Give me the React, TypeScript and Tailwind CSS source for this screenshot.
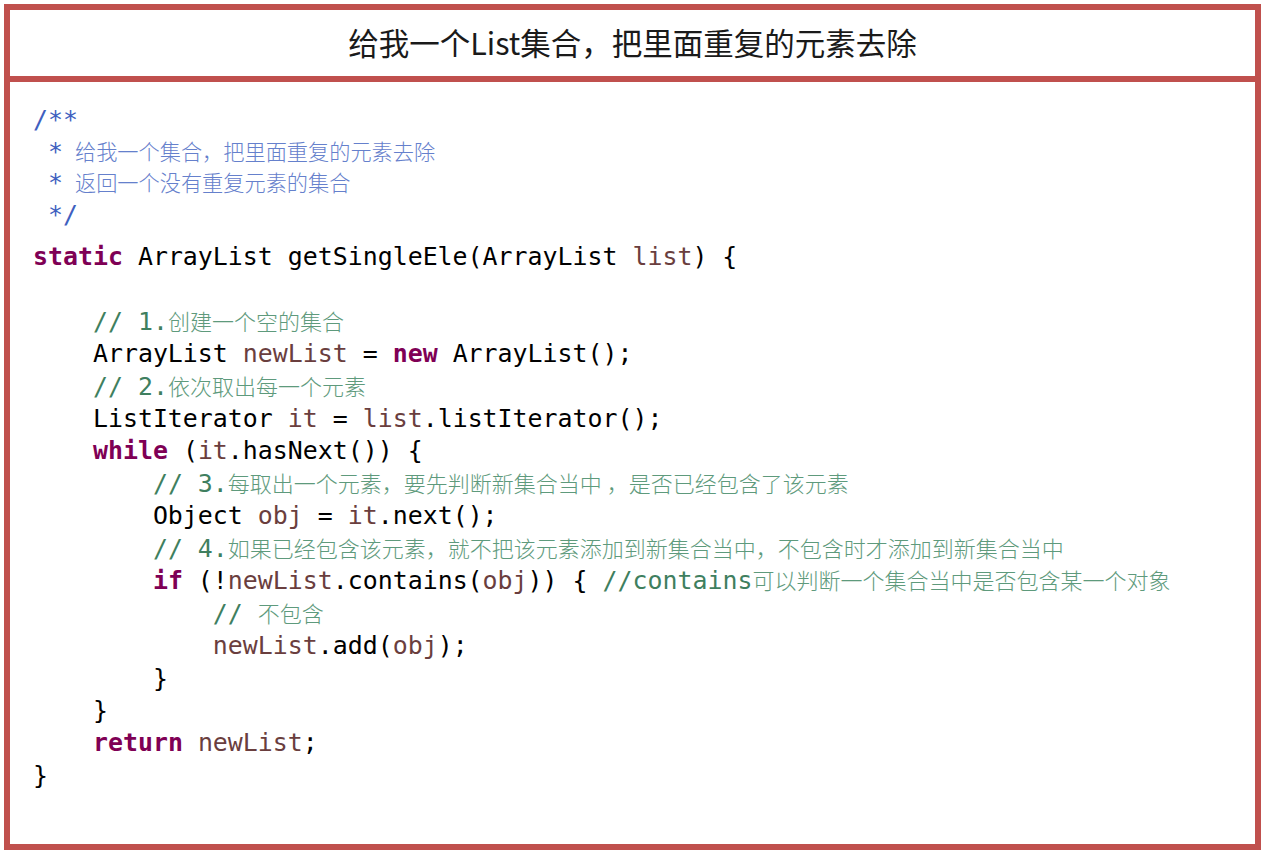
import React from "react";

type Tok = { t: string; k?: "kw" | "var" | "cm" | "doc" | "cjk" | "doccjk" };

const mono = { fontFamily: '"DejaVu Sans Mono", "Liberation Mono", monospace' };

function Token({ t, k }: Tok) {
  if (k === "kw") return <span className="font-bold text-[#7f0055]">{t}</span>;
  if (k === "var") return <span className="text-[#6a3e3e]">{t}</span>;
  if (k === "cm") return <span className="text-[#3f7f5f]">{t}</span>;
  if (k === "doc") return <span className="text-[#3f5fbf]">{t}</span>;
  if (k === "cjk")
    return (
      <span className="font-['Noto_Sans_CJK_SC',sans-serif] text-[22px] leading-none font-light text-[#5e9a7c]">
        {t}
      </span>
    );
  if (k === "doccjk")
    return (
      <span className="-ml-[3px] font-['Noto_Sans_CJK_SC',sans-serif] text-[21.2px] leading-none font-light text-[#6580cc]">
        {t}
      </span>
    );
  return <span>{t}</span>;
}

const doc: Tok[][] = [
  [{ t: "/**", k: "doc" }],
  [{ t: " * ", k: "doc" }, { t: "给我一个集合，把里面重复的元素去除", k: "doccjk" }],
  [{ t: " * ", k: "doc" }, { t: "返回一个没有重复元素的集合", k: "doccjk" }],
  [{ t: " */", k: "doc" }],
];

const code: Tok[][] = [
  [
    { t: "static", k: "kw" },
    { t: " ArrayList getSingleEle(ArrayList " },
    { t: "list", k: "var" },
    { t: ") {" },
  ],
  [{ t: " " }],
  [{ t: "    " }, { t: "// 1.", k: "cm" }, { t: "创建一个空的集合", k: "cjk" }],
  [
    { t: "    ArrayList " },
    { t: "newList", k: "var" },
    { t: " = " },
    { t: "new", k: "kw" },
    { t: " ArrayList();" },
  ],
  [{ t: "    " }, { t: "// 2.", k: "cm" }, { t: "依次取出每一个元素", k: "cjk" }],
  [
    { t: "    ListIterator " },
    { t: "it", k: "var" },
    { t: " = " },
    { t: "list", k: "var" },
    { t: ".listIterator();" },
  ],
  [
    { t: "    " },
    { t: "while", k: "kw" },
    { t: " (" },
    { t: "it", k: "var" },
    { t: ".hasNext()) {" },
  ],
  [
    { t: "        " },
    { t: "// 3.", k: "cm" },
    { t: "每取出一个元素，要先判断新集合当中 ，是否已经包含了该元素", k: "cjk" },
  ],
  [
    { t: "        Object " },
    { t: "obj", k: "var" },
    { t: " = " },
    { t: "it", k: "var" },
    { t: ".next();" },
  ],
  [
    { t: "        " },
    { t: "// 4.", k: "cm" },
    { t: "如果已经包含该元素，就不把该元素添加到新集合当中，不包含时才添加到新集合当中", k: "cjk" },
  ],
  [
    { t: "        " },
    { t: "if", k: "kw" },
    { t: " (!" },
    { t: "newList", k: "var" },
    { t: ".contains(" },
    { t: "obj", k: "var" },
    { t: ")) { " },
    { t: "//contains", k: "cm" },
    { t: "可以判断一个集合当中是否包含某一个对象", k: "cjk" },
  ],
  [{ t: "            " }, { t: "// ", k: "cm" }, { t: "不包含", k: "cjk" }],
  [
    { t: "            " },
    { t: "newList", k: "var" },
    { t: ".add(" },
    { t: "obj", k: "var" },
    { t: ");" },
  ],
  [{ t: "        }" }],
  [{ t: "    }" }],
  [{ t: "    " }, { t: "return", k: "kw" }, { t: " " }, { t: "newList", k: "var" }, { t: ";" }],
  [{ t: "}" }],
];

export default function App() {
  return (
    <div className="w-[1265px] h-[853px] bg-white overflow-hidden">
      <div className="m-1 w-[1257px] h-[846px] border-[6px] border-[#c0504d] flex flex-col">
        <div className="h-[72px] shrink-0 border-b-[6px] border-[#c0504d] flex items-center justify-center">
          <span className="font-['Noto_Sans_CJK_SC',sans-serif] text-[30.5px] text-[#1a1a1a]">
            给我一个List集合，把里面重复的元素去除
          </span>
        </div>
        <div className="flex-1 pl-[23px] pt-[22px] text-[24.9px] text-black whitespace-pre" style={mono}>
          <div className="leading-[31.7px]">
            {doc.map((line, i) => (
              <div key={i}>
                {line.map((tk, j) => (
                  <Token key={j} {...tk} />
                ))}
              </div>
            ))}
          </div>
          <div className="mt-[10px] leading-[32.44px]">
            {code.map((line, i) => (
              <div key={i} className="h-[32.44px]">
                {line.map((tk, j) => (
                  <Token key={j} {...tk} />
                ))}
              </div>
            ))}
          </div>
        </div>
      </div>
    </div>
  );
}
